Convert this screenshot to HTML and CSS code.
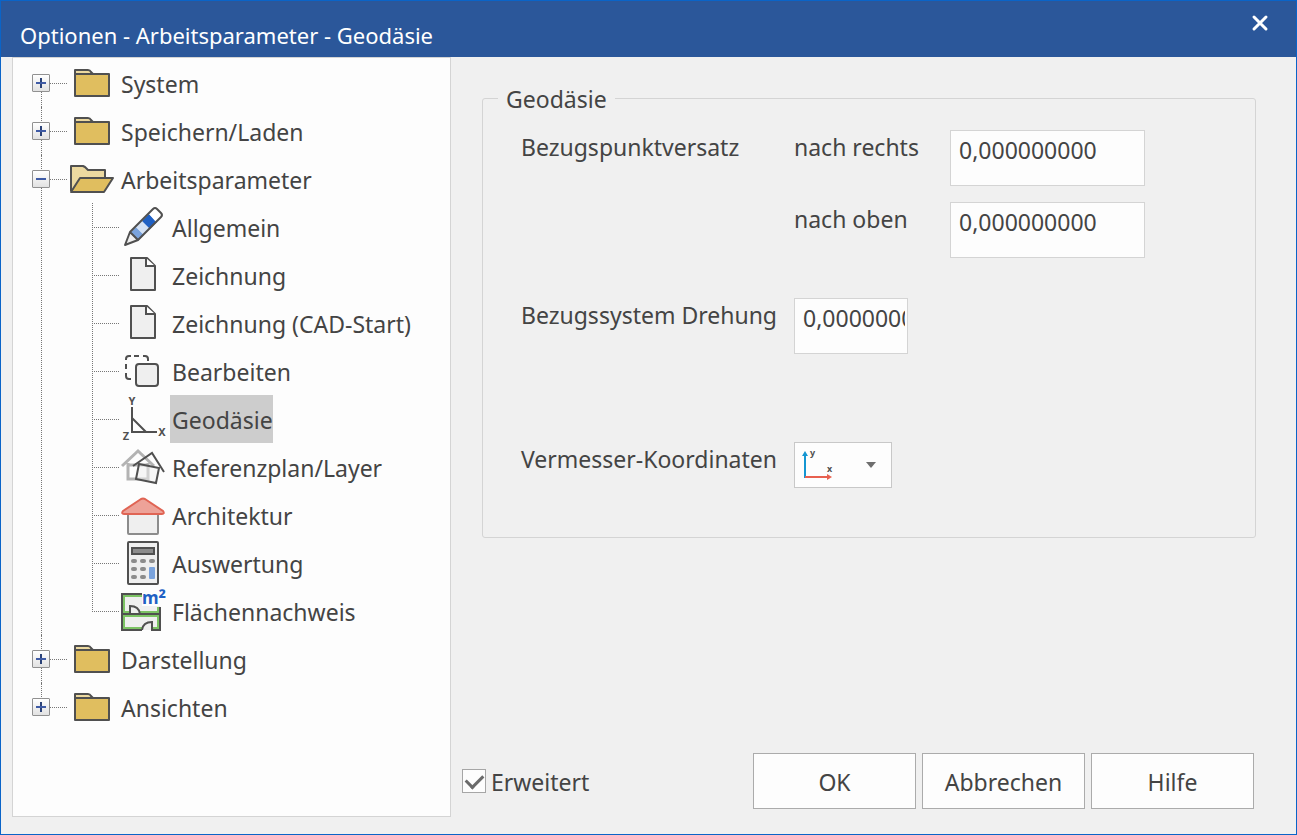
FILE: index.html
```html
<!DOCTYPE html>
<html lang="de">
<head>
<meta charset="utf-8">
<title>Optionen - Arbeitsparameter - Geodäsie</title>
<link rel="stylesheet" href="styles.css">
</head>
<body>
<svg class="defs" aria-hidden="true">
  <symbol id="folder" viewBox="0 0 48 48">
    <path d="M7 15V11h13q2 0 3 2l2 2" fill="#ecd9a0" stroke="#505050" stroke-width="2" stroke-linejoin="round"/>
    <rect x="7" y="15" width="34" height="22" fill="#e0be5f" stroke="#505050" stroke-width="2" stroke-linejoin="round"/>
  </symbol>
  <symbol id="folder-open" viewBox="0 0 48 48">
    <path d="M3 36V11h12l2 1 3 3h17v8" fill="#ecd9a0" stroke="#505050" stroke-width="2" stroke-linejoin="round"/>
    <path d="M3 37l9-14h33l-9 14z" fill="#e0be5f" stroke="#505050" stroke-width="2" stroke-linejoin="round"/>
  </symbol>
  <symbol id="page" viewBox="0 0 48 48">
    <path d="M11 7h16l8 8v24H11z" fill="#efefef" stroke="#505050" stroke-width="2" stroke-linejoin="round"/>
    <path d="M26 7v8h9" fill="#fff" stroke="#505050" stroke-width="2"/>
  </symbol>
</svg>
<div class="dialog">
  <header class="titlebar">
    <h1 class="title">Optionen - Arbeitsparameter - Geodäsie</h1>
    <button class="close" type="button" aria-label="Schließen">
      <svg viewBox="0 0 18 18" width="18" height="18"><path d="M3 3l12 12M15 3L3 15" stroke="#fff" stroke-width="3" stroke-linecap="round"/></svg>
    </button>
  </header>
  <div class="content">
    <nav class="tree" aria-label="Optionen">
      <ul class="branch">
        <li class="node"><div class="row"><button class="toggle" type="button" aria-label="System aufklappen"></button><svg class="icon"><use href="#folder"/></svg><span class="label">System</span></div></li>
        <li class="node"><div class="row"><button class="toggle" type="button" aria-label="Speichern/Laden aufklappen"></button><svg class="icon"><use href="#folder"/></svg><span class="label">Speichern/Laden</span></div></li>
        <li class="node">
          <div class="row"><button class="toggle open" type="button" aria-label="Arbeitsparameter zuklappen"></button><svg class="icon"><use href="#folder-open"/></svg><span class="label">Arbeitsparameter</span></div>
          <ul class="leaves">
            <li class="leaf"><svg class="icon" viewBox="0 0 48 48">
              <path d="M10 30l8 8-13 4z" fill="#efefef"/>
              <path d="M10 30l6-6 8 8-6 6z" fill="#7aa3dd"/><path d="M16 24l6-6 8 8-6 6z" fill="#d3e1f5"/><path d="M22 18l7-7 8 8-7 7z" fill="#1f60c4"/><path d="M29 11l6-6 7 6v2l-6 6z" fill="#fff"/>
              <path d="M10 29L33 6q2-2 4 0l4 4q2 2 0 4L18 37 5 42zM10 29l8 8" fill="none" stroke="#505050" stroke-width="2" stroke-linejoin="round"/></svg><span class="label">Allgemein</span></li>
            <li class="leaf"><svg class="icon"><use href="#page"/></svg><span class="label">Zeichnung</span></li>
            <li class="leaf"><svg class="icon"><use href="#page"/></svg><span class="label">Zeichnung (CAD-Start)</span></li>
            <li class="leaf"><svg class="icon" viewBox="0 0 48 48">
              <path d="M11 32H9q-3 0-3-3v-3M6 22v-5M6 13v-1q0-3 3-3h2M14 9h5M23 9h2q3 0 3 3v2" fill="none" stroke="#505050" stroke-width="2"/>
              <rect x="16" y="17" width="22" height="22" rx="3" fill="#efefef" stroke="#505050" stroke-width="2"/></svg><span class="label">Bearbeiten</span></li>
            <li class="leaf"><svg class="icon" viewBox="0 0 48 48">
              <path d="M12 12v25h25M12 23l14 14" fill="none" stroke="#505050" stroke-width="2"/>
              <g class="axis"><text x="12" y="10" text-anchor="middle">Y</text><text x="42" y="41" text-anchor="middle">X</text><text x="6" y="45" text-anchor="middle">Z</text></g></svg><span class="label selected">Geodäsie</span></li>
            <li class="leaf"><svg class="icon" viewBox="0 0 48 48">
              <path d="M2 23L18 8l16 15M8 20v16h20V20M8 22h20" fill="none" stroke="#b3b3b3" stroke-width="3"/>
              <path d="M19 21l20 4-3 15-20-4z" fill="#efefef" fill-opacity=".5" stroke="#505050" stroke-width="2"/>
              <path d="M13 23l19-13 12 19" fill="none" stroke="#505050" stroke-width="2"/></svg><span class="label">Referenzplan/Layer</span></li>
            <li class="leaf"><svg class="icon" viewBox="0 0 48 48">
              <rect x="8" y="20" width="30" height="23" rx="1" fill="#efefef" stroke="#8c8c8c" stroke-width="2"/>
              <path d="M3 20L21 8q2-1 4 0l18 12q2 3-1 3H4q-3 0-1-3z" fill="#eda298" stroke="#e06454" stroke-width="2"/></svg><span class="label">Architektur</span></li>
            <li class="leaf"><svg class="icon" viewBox="0 0 48 48">
              <rect x="8" y="3" width="30" height="42" rx="1" fill="#efefef" stroke="#505050" stroke-width="2"/>
              <rect x="12" y="9" width="22" height="6" fill="#8c8c8c" stroke="#505050" stroke-width="2"/>
              <g fill="#8c8c8c"><rect x="11" y="20" width="6" height="4" rx="2"/><rect x="20" y="20" width="6" height="4" rx="2"/><rect x="29" y="20" width="6" height="4" rx="2"/><rect x="11" y="28" width="6" height="4" rx="2"/><rect x="20" y="28" width="6" height="4" rx="2"/><rect x="11" y="36" width="6" height="4" rx="2"/><rect x="20" y="36" width="6" height="4" rx="2"/></g>
              <rect x="29" y="28" width="6" height="12" rx="1" fill="#7aa3dd"/></svg><span class="label">Auswertung</span></li>
            <li class="leaf"><svg class="icon" viewBox="0 0 48 48">
              <path d="M2 7h38v36H2z" fill="#efefef"/>
              <path d="M22 9H4v16h6M20 25h18v-5M22 41H4V29h34v12h-5" fill="none" stroke="#7cc364" stroke-width="2"/>
              <path d="M10 27v-8q9 0 10 8zM32 43v-8q-9 0-10 8z" fill="#efefef"/>
              <path d="M22 7H2v36h20M31 43h9V20M2 27h38M10 27v-8q9 0 10 8M32 43v-8q-9 0-10 8" fill="none" stroke="#505050" stroke-width="2"/>
              <path d="M22 0h26v19H22z" fill="#fdfdfd"/>
              <text class="area" x="22" y="17">m<tspan class="power" dy="2">²</tspan></text></svg><span class="label">Flächennachweis</span></li>
          </ul>
        </li>
        <li class="node"><div class="row"><button class="toggle" type="button" aria-label="Darstellung aufklappen"></button><svg class="icon"><use href="#folder"/></svg><span class="label">Darstellung</span></div></li>
        <li class="node"><div class="row"><button class="toggle" type="button" aria-label="Ansichten aufklappen"></button><svg class="icon"><use href="#folder"/></svg><span class="label">Ansichten</span></div></li>
      </ul>
    </nav>
    <main class="main">
      <fieldset class="group">
        <legend class="legend">Geodäsie</legend>
        <div class="fields">
          <span class="caption">Bezugspunktversatz</span>
          <label class="caption" for="rechts">nach rechts</label>
          <input class="number" id="rechts" type="text" value="0,000000000">
          <label class="caption second" for="oben">nach oben</label>
          <input class="number" id="oben" type="text" value="0,000000000">
        </div>
        <div class="fields rotation">
          <label class="caption" for="drehung">Bezugssystem Drehung</label>
          <input class="number short" id="drehung" type="text" value="0,000000000">
        </div>
        <div class="fields survey">
          <label class="caption" for="koord">Vermesser-Koordinaten</label>
          <div class="picker">
            <select class="select" id="koord"><option value="yx" aria-label="y nach oben, x nach rechts"></option></select>
            <svg class="picker-art" viewBox="0 0 98 46" width="98" height="46" aria-hidden="true">
              <path d="M11 36V13" stroke="#1496d2" stroke-width="2"/><path d="M8 14l3-5 3 5z" fill="#1496d2"/>
              <path d="M11 35h23" stroke="#e8604f" stroke-width="2"/><path d="M33 32l5 3-5 3z" fill="#e8604f"/>
              <text class="tiny" x="16" y="14">y</text><text class="tiny" x="33" y="30">x</text>
              <path d="M72 20h10l-5 6z" fill="#6e6e6e"/>
            </svg>
          </div>
        </div>
      </fieldset>
      <footer class="footer">
        <label class="check"><input class="box" type="checkbox" checked><span class="check-text">Erweitert</span></label>
        <div class="actions">
          <button class="button" type="button">OK</button>
          <button class="button" type="button">Abbrechen</button>
          <button class="button" type="button">Hilfe</button>
        </div>
      </footer>
    </main>
  </div>
</div>
</body>
</html>
```
FILE: styles.css
```css
* { box-sizing: border-box; }
body {
  margin: 0;
  font: 23px/32px "Noto Sans", "Open Sans", sans-serif;
  color: #444;
  background: #f0f0f0;
}
button, input, select { font: inherit; color: inherit; }
ul { list-style: none; margin: 0; padding: 0; }
.defs { display: none; }

.dialog {
  min-height: 100vh;
  display: flex;
  flex-direction: column;
  border: 1px solid #0a64c8;
}
.titlebar {
  height: 56px;
  display: flex;
  justify-content: space-between;
  padding: 0 27px 0 19px;
  background: #2b579a;
}
.title { margin: 0; padding-top: 18px; font-size: 22px; font-weight: 400; line-height: 32px; color: #fff; }
.close { align-self: flex-start; display: flex; margin-top: 13px; padding: 0; border: 0; background: none; }
.content { flex: 1; display: flex; }

.tree {
  flex: 0 0 439px;
  margin: 0 0 17px 11px;
  padding-top: 1px;
  border: 1px solid #d4d4d4;
  background: #fdfdfd;
}
.node { position: relative; }
.node::before {
  content: "";
  position: absolute;
  left: 28px;
  top: 0;
  bottom: 0;
  border-left: 1px dotted #777;
}
.node:first-child::before { top: 24px; }
.node:last-child::before { bottom: 24px; }
.row { display: flex; align-items: center; height: 48px; padding-left: 19px; }
.toggle {
  position: relative;
  width: 18px;
  height: 18px;
  padding: 0;
  border: 1px solid #919191;
  border-radius: 1px;
  background:
    linear-gradient(#3f5ba5, #3f5ba5) center / 10px 2px no-repeat,
    linear-gradient(#2c4378, #2c4378) center / 2px 10px no-repeat,
    linear-gradient(#fff, #e2e2e2);
}
.toggle.open {
  background:
    linear-gradient(#3f5ba5, #3f5ba5) center / 10px 2px no-repeat,
    linear-gradient(#fff, #e2e2e2);
}
.row .toggle { margin-right: 18px; }
.toggle::after {
  content: "";
  position: absolute;
  left: 17px;
  top: 8px;
  width: 17px;
  border-top: 1px dotted #777;
}
.icon { flex: none; width: 48px; height: 48px; overflow: visible; }
.label { height: 48px; margin-left: 2px; padding: 0 2px; line-height: 50px; white-space: nowrap; }
.row .label { margin-left: 3px; }
.selected { padding-right: 0; background: #cdcdcd; }
.leaves { position: relative; margin-left: 79px; }
.leaves::before {
  content: "";
  position: absolute;
  left: 0;
  top: 0;
  bottom: 23px;
  border-left: 1px dotted #777;
}
.leaf { display: flex; align-items: center; height: 48px; }
.leaf::before { content: ""; width: 27px; margin-right: 1px; border-top: 1px dotted #777; }
.axis { font: bold 11px/11px "Noto Sans", sans-serif; fill: #505050; }
.area { font: bold 17px/17px "Noto Sans", sans-serif; fill: #1f60c4; }
.power { font-size: 20px; }
.tiny { font: bold 9px/9px "Noto Sans", sans-serif; fill: #505050; }

.main {
  flex: 1;
  display: flex;
  flex-direction: column;
  justify-content: space-between;
  padding: 25px 40px 25px 11px;
}
.group {
  margin: 0 0 0 20px;
  padding: 16px 38px 49px;
  border: 1px solid #d4d4d4;
  border-radius: 3px;
}
.legend { margin-left: -23px; padding: 2px 8px 0; line-height: 30px; }
.fields { display: grid; grid-template-columns: 273px 156px 195px; row-gap: 16px; }
.rotation { margin-top: 40px; }
.survey { margin-top: 88px; }
.caption { line-height: 34px; white-space: nowrap; }
.second { grid-column: 2; }
.number {
  width: 100%;
  height: 56px;
  padding: 0 2px 16px 8px;
  border: 1px solid #d4d4d4;
  border-radius: 0;
  background: #fdfdfd;
}
.short { width: 114px; }
.picker { position: relative; width: 98px; height: 46px; }
.select {
  width: 100%;
  height: 100%;
  appearance: none;
  border: 1px solid #c8c8c8;
  border-radius: 0;
  background: #fdfdfd;
}
.picker-art { position: absolute; inset: 0; pointer-events: none; }

.footer { display: flex; justify-content: space-between; align-items: center; margin-right: 2px; }
.check { display: flex; align-items: center; gap: 5px; }
.check-text { padding-top: 2px; }
.box {
  appearance: none;
  width: 24px;
  height: 24px;
  margin: 0;
  border: 1px solid #a6a6a6;
  background: #fdfdfd;
  display: grid;
  place-items: center;
}
.box:checked::before {
  content: "";
  width: 14px;
  height: 8px;
  border: solid #6a6a6a;
  border-width: 0 0 3px 3px;
  rotate: -45deg;
  translate: 0 -2px;
}
.actions { display: flex; gap: 6px; }
.button { width: 163px; height: 56px; padding: 2px 0 0; border: 1px solid #ababab; background: #fdfdfd; }
```
